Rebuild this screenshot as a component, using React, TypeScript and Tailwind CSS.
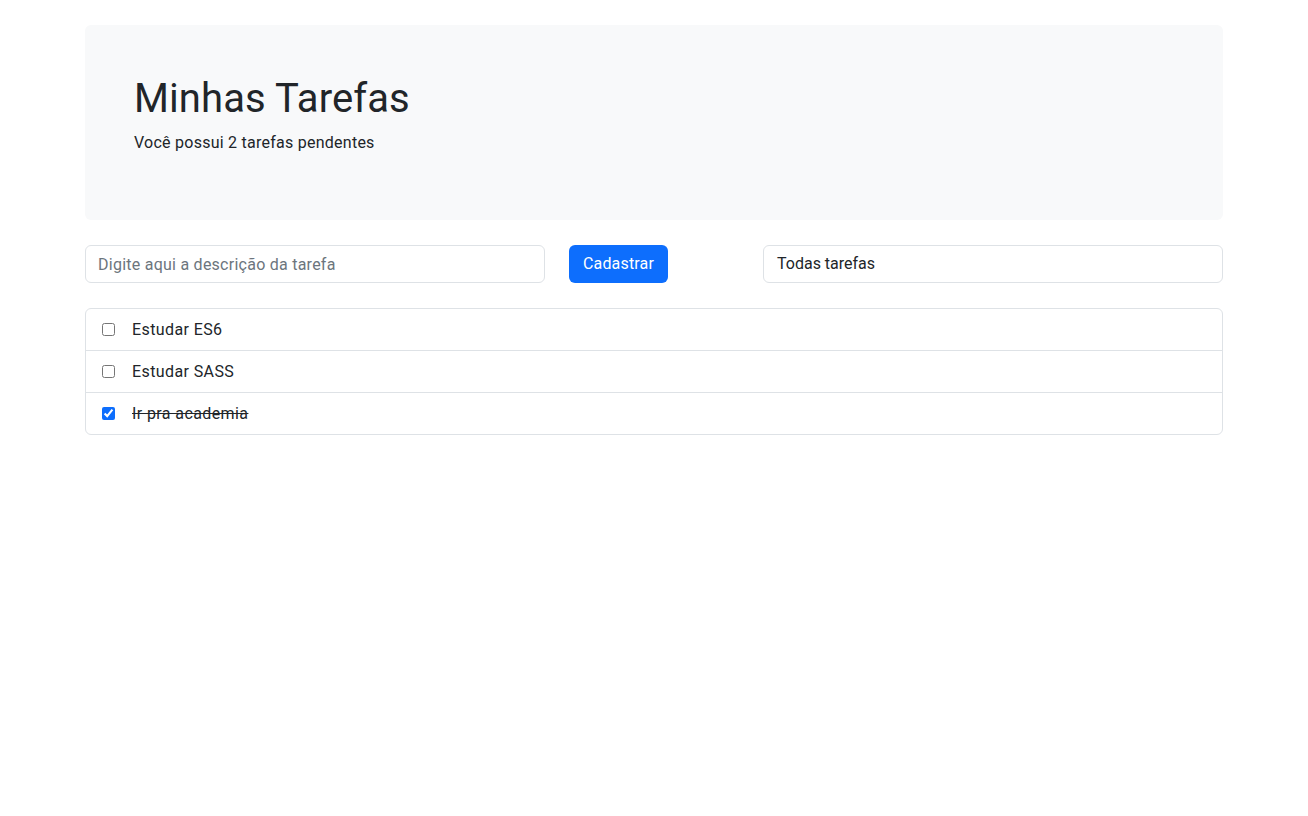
import { useState } from 'react'

const tarefas = [
  { id: 1, descricao: 'Estudar ES6', feita: false },
  { id: 2, descricao: 'Estudar SASS', feita: false },
  { id: 3, descricao: 'Ir pra academia', feita: true },
]

export default function App() {
  const [lista, setLista] = useState(tarefas)
  const pendentes = lista.filter((t) => !t.feita).length

  const alternar = (id: number) =>
    setLista((l) => l.map((t) => (t.id === id ? { ...t, feita: !t.feita } : t)))

  return (
    <div className="min-h-screen bg-white font-['Roboto',sans-serif] text-[#212529]">
      <div className="mx-auto w-[1138px] pt-[25px]">
        <div className="h-[195px] rounded-md bg-[#f8f9fa] pl-[49px] pt-[50px]">
          <h1 className="text-[40px] font-normal leading-[48px] tracking-[0.1px]">Minhas Tarefas</h1>
          <p className="mt-2 text-base leading-6 tracking-[0.25px]">
            Você possui {pendentes} tarefas pendentes
          </p>
        </div>

        <div className="mt-[25px] flex items-center">
          <input
            type="text"
            placeholder="Digite aqui a descrição da tarefa"
            className="h-[38px] w-[460px] rounded-md border border-[#dee2e6] px-3 text-base tracking-[0.25px] text-[#212529] outline-none placeholder:text-[#6c757d]"
          />
          <button className="ml-6 h-[38px] w-[99px] rounded-md bg-[#0d6efd] text-base tracking-[0.15px] text-white">
            Cadastrar
          </button>
          <div className="ml-auto flex h-[38px] w-[460px] items-center rounded-md border border-[#dee2e6] px-[13px] text-base">
            Todas tarefas
          </div>
        </div>

        <ul className="mt-[25px] rounded-md border border-[#dee2e6]">
          {lista.map((t, i) => (
            <li
              key={t.id}
              className={`flex items-center gap-4 pl-4 ${i > 0 ? 'h-[42px] border-t border-[#dee2e6]' : 'h-[41px]'}`}
            >
              <input
                type="checkbox"
                checked={t.feita}
                onChange={() => alternar(t.id)}
                className="m-0 h-[13px] w-[13px] accent-[#0d6efd]"
              />
              <span className={`ml-px text-base tracking-[0.4px] ${t.feita ? 'line-through' : ''}`}>
                {t.descricao}
              </span>
            </li>
          ))}
        </ul>
      </div>
    </div>
  )
}
